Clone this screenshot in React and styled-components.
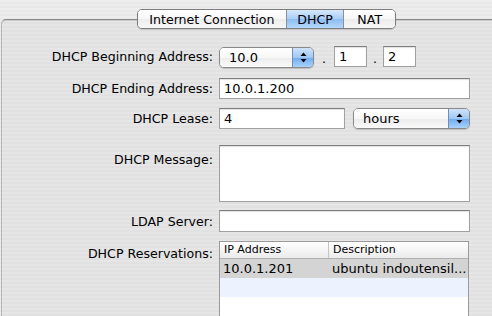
import React from "react"
import styled, { createGlobalStyle } from "styled-components"

const Global = createGlobalStyle`
  html, body {
    margin: 0;
    padding: 0;
    overflow: hidden;
  }
  body {
    font-family: "DejaVu Sans", "Liberation Sans", sans-serif;
    font-size: 12.6px;
    color: #000;
  }
`

const Window = styled.div`
  width: 492px;
  height: 316px;
  padding-top: 9px;
  box-sizing: border-box;
  overflow: hidden;
  background: repeating-linear-gradient(
    180deg,
    #ededed 0px,
    #ededed 2px,
    #e8e8e8 2px,
    #e8e8e8 4px
  );
`

const TabBar = styled.div`
  position: relative;
  z-index: 2;
  display: flex;
  margin-left: 137px;
  width: 259px;
  height: 20px;
  border: 1px solid #7c7c7c;
  border-radius: 5px;
  box-sizing: border-box;
  overflow: hidden;
  box-shadow: 0 1px 1px rgba(0, 0, 0, 0.15);
`

const Tab = styled.div`
  display: flex;
  align-items: center;
  justify-content: center;
  width: ${p => p.$w}px;
  height: 100%;
  font-size: 12.6px;
  border-left: ${p => (p.$first ? "none" : "1px solid #8f8f8f")};
  background: ${p =>
    p.$active
      ? "linear-gradient(180deg, #d6e8fb 0%, #a8cdf6 50%, #8dbdf2 51%, #b4d7fb 100%)"
      : "linear-gradient(180deg, #ffffff 0%, #f6f6f6 50%, #ececec 51%, #f7f7f7 100%)"};
  box-sizing: border-box;
`

const Panel = styled.div`
  margin-top: -10px;
  margin-left: 1px;
  height: 300px;
  border-top: 1px solid #8a8a8a;
  border-left: 1px solid #b5b5b5;
  border-top-left-radius: 5px;
  box-shadow: inset 0 1px 0 #c9c9c9;
  padding-top: 24px;
  background: repeating-linear-gradient(
    180deg,
    #e6e6e6 0px,
    #e6e6e6 2px,
    #e1e1e1 2px,
    #e1e1e1 4px
  );
`

const Row = styled.div`
  display: flex;
  align-items: ${p => (p.$top ? "flex-start" : "center")};
  margin-top: ${p => p.$mt || 0}px;
`

const Label = styled.div`
  width: 217px;
  flex: none;
  text-align: right;
  padding-right: 6px;
  box-sizing: border-box;
  white-space: nowrap;
  padding-top: ${p => p.$pt || 0}px;
`

const Field = styled.div`
  width: ${p => p.$w}px;
  height: ${p => p.$h || 21}px;
  flex: none;
  background: #fff;
  border: 1px solid #a0a0a0;
  border-top-color: #7e7e7e;
  box-shadow: inset 0 1px 1px rgba(0, 0, 0, 0.12);
  box-sizing: border-box;
  padding: 2px 0 0 4px;
  font-size: 13px;
  line-height: 16px;
`

const Popup = styled.div`
  display: flex;
  width: ${p => p.$w}px;
  height: 21px;
  flex: none;
  border: 1px solid #8a8a8a;
  border-radius: 5px;
  overflow: hidden;
  box-sizing: border-box;
  box-shadow: 0 1px 1px rgba(0, 0, 0, 0.18);
  margin-left: ${p => p.$ml || 0}px;
  margin-top: ${p => p.$mt || 0}px;
`

const PopupText = styled.div`
  flex: 1;
  padding: 2px 0 0 9px;
  font-size: 13px;
  line-height: 16px;
  background: linear-gradient(180deg, #ffffff 0%, #f7f7f7 50%, #ececec 51%, #fafafa 100%);
`

const PopupArrows = styled.div`
  width: 20px;
  display: flex;
  align-items: center;
  justify-content: center;
  border-left: 1px solid #6f8fb8;
  background: linear-gradient(180deg, #cfe3fb 0%, #9fc8f5 50%, #6eaaf0 51%, #a9d3fb 100%);
`

const Dot = styled.span`
  width: ${p => p.$w}px;
  flex: none;
  text-align: center;
  padding-top: 3px;
`

const Table = styled.div`
  width: 250px;
  flex: none;
  border: 1px solid #9a9a9a;
  border-bottom: none;
  box-sizing: border-box;
  background: #fff;
`

const HeaderRow = styled.div`
  display: flex;
  height: 16px;
  border-bottom: 1px solid #b0b0b0;
  background: linear-gradient(180deg, #ffffff 0%, #f4f4f4 55%, #ebebeb 100%);
  font-size: 11px;
  line-height: 15px;
`

const Cell = styled.div`
  width: ${p => p.$w}px;
  flex: ${p => (p.$w ? "none" : 1)};
  padding-left: ${p => (p.$head ? 4 : 3)}px;
  box-sizing: border-box;
  border-right: ${p => (p.$div ? "1px solid #c4c4c4" : "none")};
  white-space: nowrap;
  overflow: hidden;
  font-size: ${p => (p.$head ? 11 : 13)}px;
`

const DataRow = styled.div`
  display: flex;
  height: 19px;
  line-height: 19px;
  background: ${p => p.$bg};
`

const Arrows = () => (
  <svg width="7" height="11" viewBox="0 0 7 11">
    <path d="M3.5 0.5 L6.5 4 L0.5 4 Z" fill="#0a0a0a" />
    <path d="M3.5 10.5 L6.5 7 L0.5 7 Z" fill="#0a0a0a" />
  </svg>
)

const rows = [
  { ip: "10.0.1.201", desc: "ubuntu indoutensil...", bg: "#d4d4d4" },
  { ip: "", desc: "", bg: "#edf3fe" },
  { ip: "", desc: "", bg: "#ffffff" },
  { ip: "", desc: "", bg: "#edf3fe" },
]

const App = () => {
  return (
    <Window>
      <Global />
      <TabBar>
        <Tab $first $w={149}>Internet Connection</Tab>
        <Tab $active $w={58}>DHCP</Tab>
        <Tab $w={52}>NAT</Tab>
      </TabBar>
      <Panel>
        <Row $mt={1}>
          <Label>DHCP Beginning Address:</Label>
          <Popup $w={95} $mt={2}>
            <PopupText>10.0</PopupText>
            <PopupArrows>
              <Arrows />
            </PopupArrows>
          </Popup>
          <Dot $w={20}>.</Dot>
          <Field $w={33}>1</Field>
          <Dot $w={16}>.</Dot>
          <Field $w={33}>2</Field>
        </Row>
        <Row $mt={10}>
          <Label>DHCP Ending Address:</Label>
          <Field $w={251}>10.0.1.200</Field>
        </Row>
        <Row $mt={9}>
          <Label>DHCP Lease:</Label>
          <Field $w={126}>4</Field>
          <Popup $w={117} $ml={8}>
            <PopupText>hours</PopupText>
            <PopupArrows>
              <Arrows />
            </PopupArrows>
          </Popup>
        </Row>
        <Row $top $mt={16}>
          <Label $pt={7}>DHCP Message:</Label>
          <Field $w={251} $h={57} />
        </Row>
        <Row $mt={8}>
          <Label>LDAP Server:</Label>
          <Field $w={251} $h={22} />
        </Row>
        <Row $top $mt={9}>
          <Label $pt={5}>DHCP Reservations:</Label>
          <Table>
            <HeaderRow>
              <Cell $head $div $w={109}>IP Address</Cell>
              <Cell $head>Description</Cell>
            </HeaderRow>
            {rows.map((r, i) => (
              <DataRow key={i} $bg={r.bg}>
                <Cell $w={109}>{r.ip}</Cell>
                <Cell>{r.desc}</Cell>
              </DataRow>
            ))}
          </Table>
        </Row>
      </Panel>
    </Window>
  )
}

export default App
